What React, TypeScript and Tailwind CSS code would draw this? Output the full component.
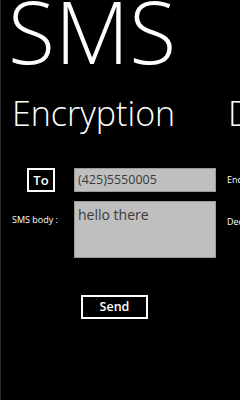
import React from "react";

const font = { fontFamily: '"Open Sans", "Noto Sans", sans-serif' };

const App = () => {
  return (
    <div
      className="w-[240px] h-[400px] bg-black overflow-hidden border-l border-[#2a2a2a] text-white"
      style={font}
    >
      <div className="flex flex-col">
        {/* page title */}
        <h1 className="ml-[7px] mt-[-12px] text-[86px] font-light leading-none whitespace-nowrap">
          SMS
        </h1>

        {/* pivot headers */}
        <div className="mt-[22px] flex whitespace-nowrap">
          <h2 className="ml-[11px] w-[216px] shrink-0 text-[34px] font-light leading-none">
            Encryption
          </h2>
          <h2 className="text-[34px] font-light leading-none">Decryption</h2>
        </div>

        {/* form */}
        <div className="mt-[38px] flex flex-col">
          <div className="flex items-center">
            <div className="w-[73px] shrink-0 flex">
              <button className="ml-[26px] w-[28px] h-[24px] border-2 border-white text-[13px] font-semibold leading-none flex items-center justify-center">
                To
              </button>
            </div>
            <div className="w-[142px] h-[24px] shrink-0 bg-[#bfbfbf] border border-[#9a9a9a] text-[#3a3a3a] text-[12.5px] leading-none flex items-center pl-[3px]">
              (425)5550005
            </div>
            <span className="ml-[11px] text-[9px] whitespace-nowrap">Encrypted</span>
          </div>

          <div className="mt-[9px] flex items-start">
            <div className="w-[73px] shrink-0 pt-[12px] pl-[11px] text-[9px] whitespace-nowrap">
              SMS body :
            </div>
            <div className="w-[142px] h-[57px] shrink-0 bg-[#bfbfbf] border border-[#9a9a9a] text-[#3a3a3a] text-[14px] leading-none pt-[6px] pl-[3px]">
              hello there
            </div>
            <span className="ml-[11px] mt-[14px] text-[9px] whitespace-nowrap">Decrypted</span>
          </div>

          <div className="mt-[37px] flex">
            <button className="ml-[80px] w-[67px] h-[24px] border-2 border-white text-[12.5px] font-semibold leading-none flex items-center justify-center">
              Send
            </button>
          </div>
        </div>
      </div>
    </div>
  );
};

export default App;
